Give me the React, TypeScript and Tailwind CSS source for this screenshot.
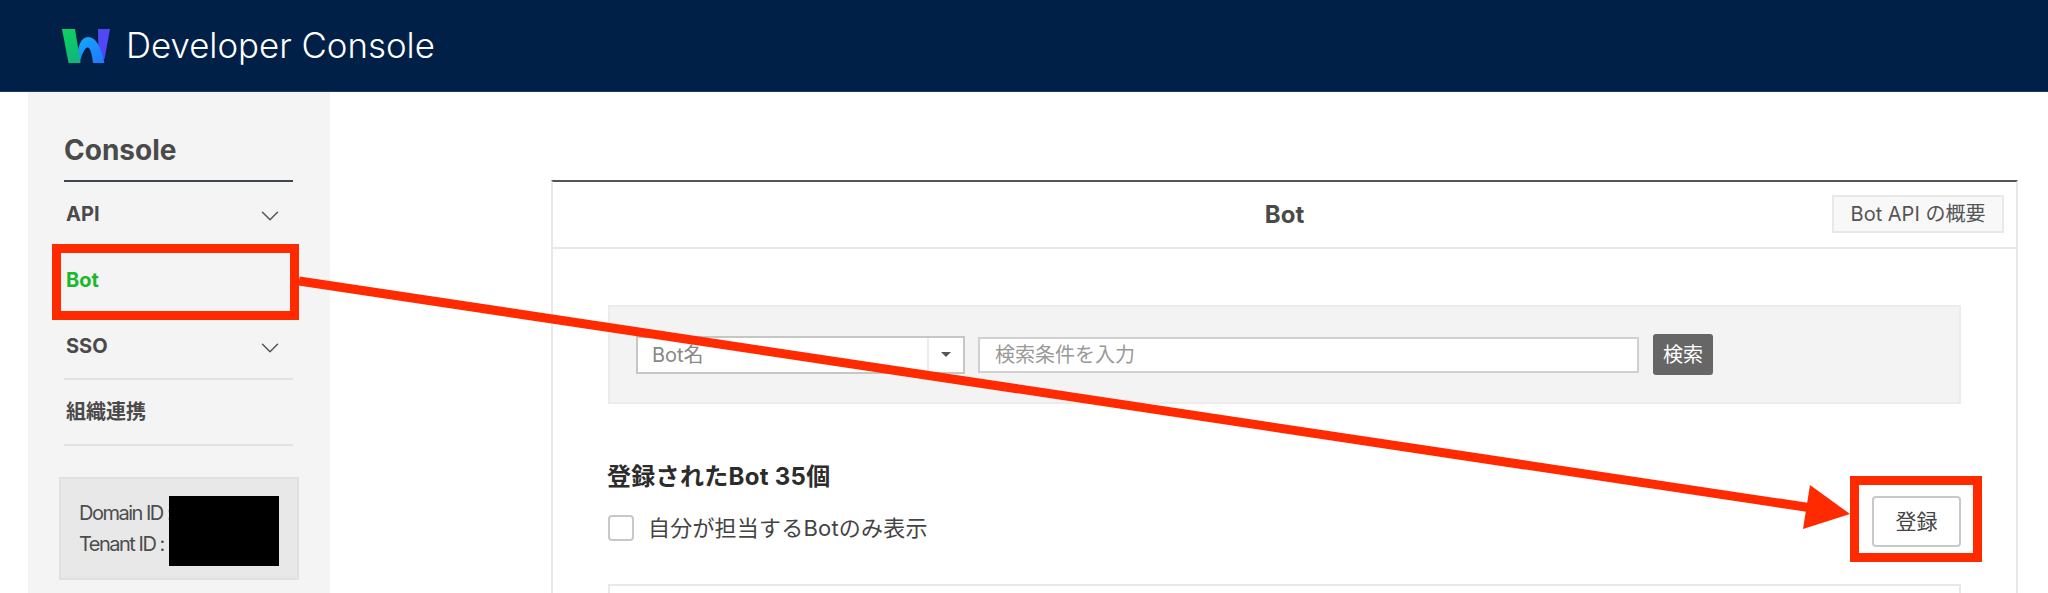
import { ChevronDown } from "lucide-react";

const fontStack = "font-['Inter','Noto_Sans_CJK_JP',sans-serif]";

function Logo() {
  return (
    <svg width="48" height="35" viewBox="0 0 48 35" className="shrink-0">
      <defs>
        <linearGradient id="arch" x1="0" y1="0" x2="1" y2="1">
          <stop offset="0" stopColor="#16a8f7" />
          <stop offset="1" stopColor="#1f78ff" />
        </linearGradient>
        <linearGradient id="leaf" x1="0" y1="0" x2="0.4" y2="1">
          <stop offset="0" stopColor="#0cd45c" />
          <stop offset="1" stopColor="#0fb878" />
        </linearGradient>
      </defs>
      <path d="M36 1h12l-5.500 30h-6z" fill="#5247f6" />
      <path d="M15 35C15 18 19 9 26 9C34 9 39 19 42.500 35H31C30 26 28.500 19.500 25.500 19.500C23 19.500 19 27 18 35Z" fill="url(#arch)" />
      <path d="M0 1h13l5.500 34H6.500z" fill="url(#leaf)" />
    </svg>
  );
}

function NavRow({ label, expandable, active }: { label: string; expandable?: boolean; active?: boolean }) {
  return (
    <div className="flex h-[66px] items-center justify-between border-b-2 border-[#e2e2e2] pl-[2px] pr-[8px]">
      <span className={`text-[20px] font-bold ${active ? "text-[#19b92c]" : "text-[#4a4a4a]"}`}>{label}</span>
      {expandable && <ChevronDown className="mt-[3px] h-[30px] w-[30px] text-[#555]" strokeWidth={1.2} />}
    </div>
  );
}

function Sidebar() {
  return (
    <aside className="ml-[28px] h-[501px] w-[302px] shrink-0 bg-[#f4f4f4] pl-[36px] pr-[37px]">
      <h2 className="flex h-[88px] items-end pb-[9px] text-[28px] font-bold text-[#4a4a4a]">Console</h2>
      <div className="border-t-2 border-[#3f4650]">
        <NavRow label="API" expandable />
        <NavRow label="Bot" active />
        <NavRow label="SSO" expandable />
        <NavRow label="組織連携" />
      </div>
      <div className="mt-[31px] -ml-[5px] -mr-[6px] flex h-[103px] items-center border-2 border-[#e0e0e0] bg-[#e8e8e8] pl-[18px] pr-[18px]">
        <div className="w-[90px] shrink-0 whitespace-nowrap text-[20px] leading-[31px] tracking-[-1.5px] text-[#4d4d4d]">
          <div>Domain ID :</div>
          <div>Tenant ID :</div>
        </div>
        <div className="relative mt-[4px] h-[70px] w-[110px] shrink-0 bg-black" />
      </div>
    </aside>
  );
}

function SearchPanel() {
  return (
    <div className="flex h-[99px] items-center border-2 border-[#ececec] bg-[#f3f3f3] pl-[26px]">
      <div className="flex h-[38px] w-[329px] items-stretch border-2 border-[#c6c6c6] bg-white">
        <span className="flex flex-1 items-center pl-[14px] text-[20px] text-[#888]">Bot名</span>
        <span className="flex w-[36px] items-center justify-center border-l-2 border-[#ececec]">
          <span className="h-0 w-0 border-x-[5px] border-t-[5px] border-x-transparent border-t-[#555]" />
        </span>
      </div>
      <input
        readOnly
        placeholder="検索条件を入力"
        className="ml-[13px] h-[36px] w-[661px] border-2 border-[#d0d0d0] bg-white pl-[15px] text-[20px] outline-none placeholder:text-[#999]"
      />
      <button className="ml-[14px] h-[41px] w-[60px] rounded-[3px] bg-[#666] text-[20px] text-white">検索</button>
    </div>
  );
}

function BotCard() {
  return (
    <section className="border-x-2 border-t-2 border-x-[#e8e8e8] border-t-[#555]">
      <div className="relative flex h-[67px] items-center justify-center border-b-2 border-[#e8e8e8]">
        <span className="text-[24px] font-bold text-[#4a4a4a]">Bot</span>
        <button className="absolute right-[12px] top-[13px] h-[38px] w-[172px] border-2 border-[#e8e8e8] bg-[#f8f8f8] text-[20px] text-[#555]">
          Bot API の概要
        </button>
      </div>
      <div className="pl-[55px] pr-[55px] pt-[56px]">
        <SearchPanel />
        <div className="mt-[58px] flex items-start justify-between">
          <div>
            <h3 className="-ml-[1px] text-[24px] font-bold leading-[30px] tracking-[0.3px] text-[#2c2c2c]">登録されたBot 35個</h3>
            <label className="mt-[21px] flex items-center gap-[14px] text-[22px] leading-[30px] tracking-[0.2px] text-[#444]">
              <span className="h-[26px] w-[26px] rounded-[4px] border-2 border-[#c8c8c8] bg-white" />
              自分が担当するBotのみ表示
            </label>
          </div>
          <button className="mt-[34px] h-[51px] w-[89px] rounded-[4px] border-2 border-[#c8c8c8] bg-white text-[21px] text-[#444]">登録</button>
        </div>
        <div className="mt-[37px] h-[40px] border-x-2 border-t-2 border-[#e8e8e8]" />
      </div>
    </section>
  );
}

export default function App() {
  return (
    <div className={`relative h-[593px] w-[2048px] overflow-hidden bg-white ${fontStack}`}>
      <header className="flex h-[92px] items-center border-b border-[#1d3a5e] bg-[#002048] pl-[62px]">
        <Logo />
        <span className="ml-[16px] text-[34.8px] font-light text-white">Developer Console</span>
      </header>
      <div className="flex">
        <Sidebar />
        <main className="ml-[221px] w-[1467px] pt-[88px]">
          <BotCard />
        </main>
      </div>

      {/* red annotations from the screenshot */}
      <div className="absolute left-[52px] top-[244px] h-[76px] w-[247px] border-[9px] border-[#ff2a00]" />
      <div className="absolute left-[1850px] top-[476px] h-[86px] w-[132px] border-[9px] border-[#ff2a00]" />
      <svg className="absolute left-0 top-0" width="2048" height="593">
        <line x1="299" y1="281" x2="1812" y2="508" stroke="#ff2a00" strokeWidth="9" />
        <polygon points="1850,514 1810,485 1803,529" fill="#ff2a00" />
      </svg>
    </div>
  );
}
